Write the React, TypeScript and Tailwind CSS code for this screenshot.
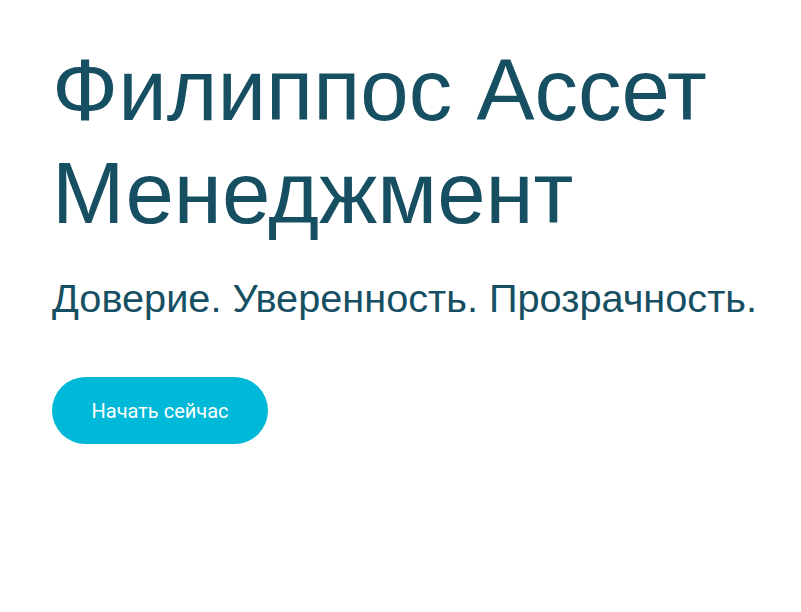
export default function App() {
  return (
    <div className="min-h-screen bg-white">
      <div className="px-[52px] pt-[38px]">
        <h1 className="font-['Liberation_Sans',Arial,sans-serif] text-[87px] leading-[103px] text-[#164f62]">
          Филиппос Ассет
          <br />
          Менеджмент
        </h1>
        <p className="mt-[31px] whitespace-nowrap font-['Liberation_Sans',Arial,sans-serif] text-[39.7px] leading-[46px] text-[#164f62]">
          Доверие. Уверенность. Прозрачность.
        </p>
        <button className="mt-[56px] flex h-[67px] w-[216px] items-center justify-center rounded-full bg-[#00b8d8] font-['Roboto',sans-serif] text-[20px] text-white">
          Начать сейчас
        </button>
      </div>
    </div>
  );
}
